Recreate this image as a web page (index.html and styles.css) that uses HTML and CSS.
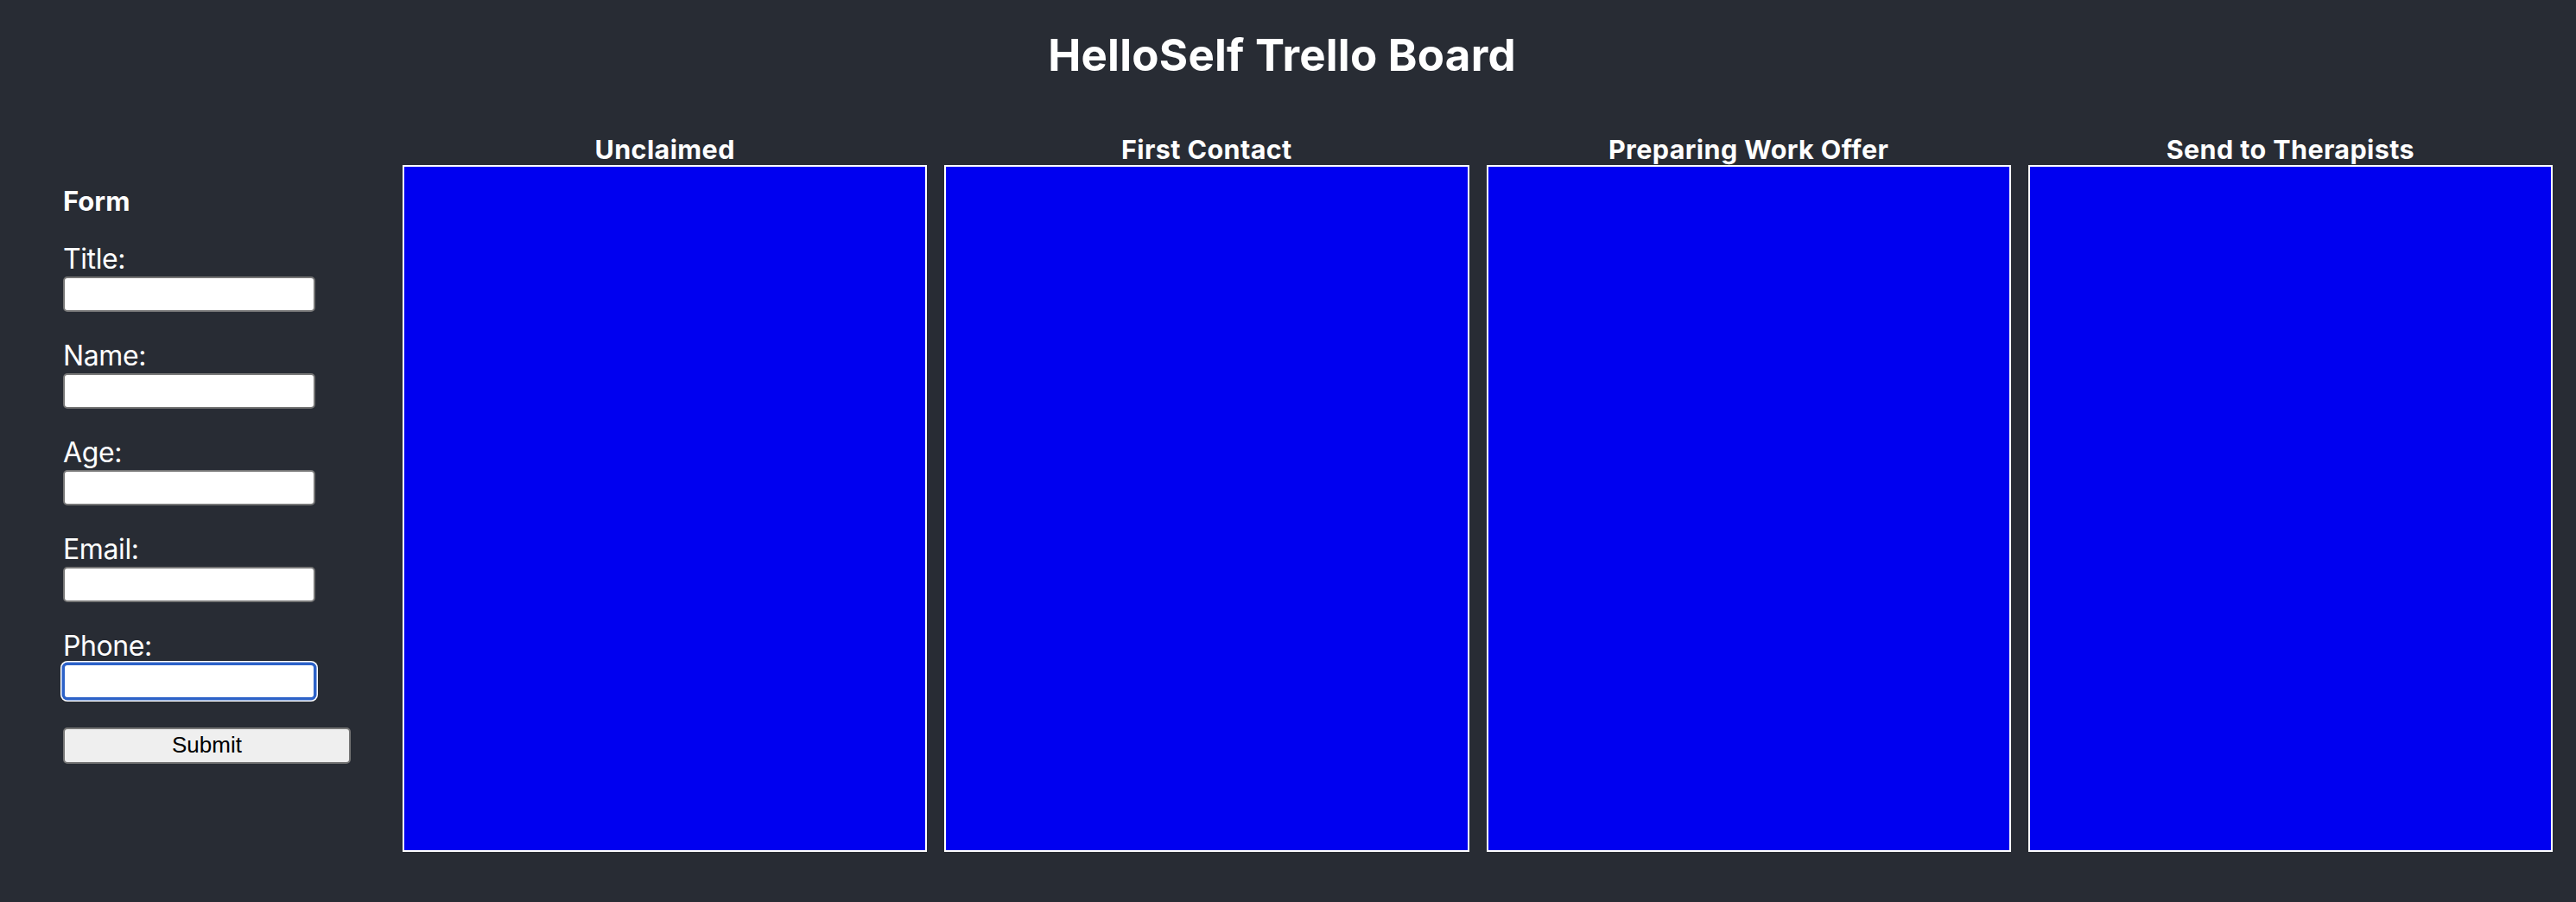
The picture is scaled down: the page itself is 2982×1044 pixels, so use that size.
FILE: index.html
```html
<!DOCTYPE html>
<html lang="en">
<head>
<meta charset="utf-8">
<title>HelloSelf Trello Board</title>
<link rel="stylesheet" href="styles.css">
</head>
<body>
<div class="app">
  <h1 class="app-title">HelloSelf Trello Board</h1>
  <div class="main">
    <aside class="sidebar">
      <h3 class="form-title">Form</h3>
      <form class="form">
        <div class="field">
          <label class="label">Title:</label>
          <input class="input" type="text">
        </div>
        <div class="field">
          <label class="label">Name:</label>
          <input class="input" type="text">
        </div>
        <div class="field">
          <label class="label">Age:</label>
          <input class="input" type="text">
        </div>
        <div class="field">
          <label class="label">Email:</label>
          <input class="input" type="text">
        </div>
        <div class="field">
          <label class="label">Phone:</label>
          <input class="input input-focused" type="text">
        </div>
        <button class="submit" type="button">Submit</button>
      </form>
    </aside>
    <section class="board">
      <div class="column">
        <h3 class="column-title">Unclaimed</h3>
        <div class="column-body"></div>
      </div>
      <div class="column">
        <h3 class="column-title">First Contact</h3>
        <div class="column-body"></div>
      </div>
      <div class="column">
        <h3 class="column-title">Preparing Work Offer</h3>
        <div class="column-body"></div>
      </div>
      <div class="column">
        <h3 class="column-title">Send to Therapists</h3>
        <div class="column-body"></div>
      </div>
    </section>
  </div>
</div>
</body>
</html>
```
FILE: styles.css
```css
html, body {
  margin: 0;
  padding: 0;
}
body {
  background: #282c34;
  color: #ffffff;
  font-family: Inter, "Noto Sans", "DejaVu Sans", sans-serif;
  min-height: 100vh;
}
.app {
  display: flex;
  flex-direction: column;
}
.app-title {
  margin: 0;
  padding-top: 33px;
  padding-right: 14px;
  font-size: 51px;
  line-height: 62px;
  font-weight: 700;
  letter-spacing: 0.25px;
  text-align: center;
}
.main {
  display: flex;
  margin-top: 60px;
}
.sidebar {
  width: 466px;
  flex: 0 0 466px;
  box-sizing: border-box;
  padding-left: 73px;
  padding-top: 59px;
}
.form-title {
  margin: 0 0 28px 0;
  font-size: 31px;
  line-height: 38px;
  font-weight: 700;
}
.form {
  display: flex;
  flex-direction: column;
  align-items: flex-start;
}
.field {
  display: flex;
  flex-direction: column;
  margin-bottom: 31px;
}
.label {
  font-size: 32px;
  line-height: 40px;
  font-weight: 400;
  letter-spacing: -0.4px;
}
.input {
  box-sizing: border-box;
  width: 292px;
  height: 41px;
  margin: 0;
  padding: 0 4px;
  border: 2px solid #767676;
  border-radius: 5px;
  background: #ffffff;
  outline: none;
}
.input-focused {
  border-color: #2d62c8;
  box-shadow: 0 0 0 1.5px #2d62c8, 0 0 0 3px #ffffff;
}
.submit {
  box-sizing: border-box;
  width: 333px;
  height: 42px;
  margin: 1.5px 0 0 0;
  padding: 0;
  border: 2px solid #767676;
  border-radius: 5px;
  background: #efefef;
  color: #000000;
  font-family: "Liberation Sans", Arial, sans-serif;
  font-size: 26px;
}
.board {
  flex: 1;
  display: flex;
  gap: 20px;
  padding-right: 27px;
}
.column {
  flex: 1;
  display: flex;
  flex-direction: column;
}
.column-title {
  margin: 0;
  font-size: 30.5px;
  line-height: 36px;
  font-weight: 700;
  letter-spacing: 0.4px;
  text-align: center;
}
.column-body {
  box-sizing: border-box;
  height: 795px;
  border: 2px solid #ffffff;
  background: #0000f0;
}
```
